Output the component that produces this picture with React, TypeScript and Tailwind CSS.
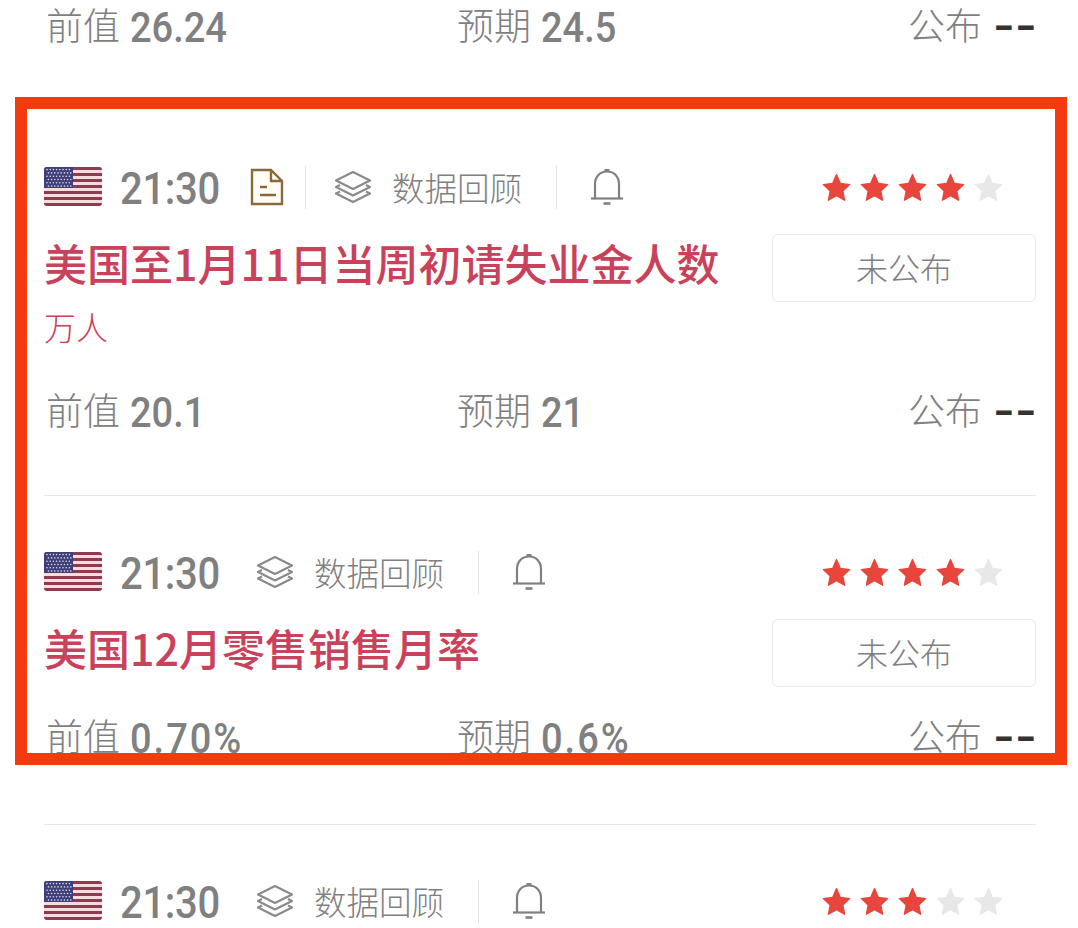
import React from 'react';

const cjk = '"Noto Sans CJK SC", sans-serif';

function Flag() {
    const stripes = [0, 1, 2, 3, 4, 5, 6];
    const dots: [number, number][] = [];
    for (let r = 0; r < 6; r++) {
        for (let c = 0; c < 8; c++) {
            dots.push([3 + c * 3.2 + (r % 2) * 1.4, 2.6 + r * 3.3]);
        }
    }
    return (
        <svg width="58" height="40" viewBox="0 0 58 40" className="shrink-0">
            <defs>
                <clipPath id="flag-clip">
                    <rect width="58" height="39" rx="3" />
                </clipPath>
            </defs>
            <g clipPath="url(#flag-clip)">
                <rect width="58" height="39" fill="#f8dcdc" />
                {stripes.map((i) => (
                    <rect key={i} y={i * 6} width="58" height="3" fill="#8e3a50" />
                ))}
                <rect width="29" height="21" fill="#3f4079" />
                {dots.map(([x, y], i) => (
                    <circle key={i} cx={x} cy={y} r="0.8" fill="#d9d9ea" />
                ))}
            </g>
        </svg>
    );
}

function DocIcon() {
    return (
        <svg width="34" height="38" viewBox="0 0 34 38" fill="none" stroke="#8a6a3c" strokeWidth="2.4" className="shrink-0">
            <path d="M2 2H21L32 13V36H2Z" fill="#fffdf6" />
            <path d="M21 2V13H32" />
            <path d="M10 19H17M10 27H26" />
        </svg>
    );
}

function LayersIcon() {
    return (
        <svg width="40" height="34" viewBox="0 0 40 34" fill="none" stroke="#8a8a8a" strokeWidth="2.2" strokeLinejoin="round" className="shrink-0">
            <path d="M20 2L37 10.5L20 19L3 10.5Z" />
            <path d="M7 15L3 17L20 25.5L37 17L33 15" />
            <path d="M7 21.5L3 23.5L20 32L37 23.5L33 21.5" />
        </svg>
    );
}

function BellIcon() {
    return (
        <svg width="34" height="40" viewBox="0 0 34 40" fill="none" stroke="#808080" strokeWidth="2.2" className="shrink-0">
            <path d="M5 31V17C5 9.5 10 4.5 17 4.5C24 4.5 29 9.5 29 17V31" />
            <path d="M1 31.5H33" />
            <path d="M14.5 3.5H19.5" strokeWidth="3" />
            <path d="M13.5 36.5H20.5" strokeWidth="2.6" />
        </svg>
    );
}

function Stars({ count }: { count: number }) {
    return (
        <div className="flex justify-end gap-[7px] pr-[32px]">
            {[0, 1, 2, 3, 4].map((i) => (
                <svg key={i} width="31" height="30" viewBox="0 0 24 23">
                    <path
                        d="M12 1.8l3 6.9 7.2 .9-5.3 5 1.4 7.2L12 18.3l-6.3 3.5 1.4-7.2-5.3-5 7.2-.9z"
                        fill={i < count ? '#e8453c' : '#e8e8e8'}
                        stroke={i < count ? '#e8453c' : '#e8e8e8'}
                        strokeWidth="1"
                        strokeLinejoin="round"
                    />
                </svg>
            ))}
        </div>
    );
}

function Time() {
    return (
        <span className="inline-block w-[98px] shrink-0 scale-y-[1.12] text-[40px] leading-none font-medium tracking-[-0.3px] text-[#808080] font-['Roboto',sans-serif]">
            21:30
        </span>
    );
}

function Header({ stars, hasDoc }: { stars: number; hasDoc?: boolean }) {
    return (
        <div className="flex h-[40px] items-center justify-between">
            <div className="flex items-center">
                <Flag />
                <div className="mt-[4px] ml-[18px] flex">
                    <Time />
                </div>
                {hasDoc ? (
                    <div className="ml-[32px] flex items-center">
                        <DocIcon />
                        <div className="ml-[21px] h-[43px] w-px bg-[#e3e3e3]" />
                        <div className="ml-[27px]">
                            <LayersIcon />
                        </div>
                    </div>
                ) : (
                    <div className="ml-[37px]">
                        <LayersIcon />
                    </div>
                )}
                <span className="ml-[19px] text-[32.5px] leading-none font-light text-[#808080]">数据回顾</span>
                <div className="ml-[34px] h-[43px] w-px bg-[#e3e3e3]" />
                <div className="ml-[33px]">
                    <BellIcon />
                </div>
            </div>
            <Stars count={stars} />
        </div>
    );
}

function Values({ prev, expect, className }: { prev: string; expect: string; className?: string }) {
    const label = 'pb-[5px] text-[37px] leading-none font-light text-[#808080]';
    const num = "ml-[10px] inline-block scale-y-[1.12] text-[38px] leading-none font-medium text-[#808080] font-['Roboto',sans-serif]";
    return (
        <div className={`flex items-center pl-[2px] ${className ?? ''}`}>
            <div className="flex w-[411px] items-center">
                <span className={label}>前值</span>
                <span className={`${num} ${prev.includes('%') ? 'tracking-[2px]' : ''}`}>{prev}</span>
            </div>
            <div className="flex flex-1 items-center">
                <span className={label}>预期</span>
                <span className={`${num} ${expect.includes('%') ? 'tracking-[2px]' : ''}`}>{expect}</span>
            </div>
            <div className="flex items-center pr-[3px]">
                <span className={label}>公布</span>
                <span className="ml-[11px] inline-block w-[40px] origin-left scale-x-[1.4] text-[40px] leading-none font-bold text-[#333333] font-['Roboto',sans-serif]">
                    --
                </span>
            </div>
        </div>
    );
}

function Item({
    title,
    unit,
    stars,
    hasDoc,
}: {
    title: string;
    unit?: string;
    stars: number;
    hasDoc?: boolean;
}) {
    return (
        <div className="pt-[56px]">
            <Header stars={stars} hasDoc={hasDoc} />
            <div className="mt-[27px] flex justify-between">
                <div>
                    <h3 className="h-[62px] text-[43px] leading-[56px] font-medium whitespace-nowrap text-[#c9415a]">{title}</h3>
                    {unit ? <p className="mt-[14px] h-[32px] text-[32px] leading-[32px] font-light text-[#c9415a]">{unit}</p> : null}
                </div>
                <div className="flex h-[68px] w-[264px] items-center justify-center rounded-[6px] border border-[#e9e9e9] pb-[3px] text-[32px] font-light text-[#808080]">
                    未公布
                </div>
            </div>
        </div>
    );
}

export default function App() {
    return (
        <div className="relative h-[928px] w-[1078px] overflow-hidden bg-white pr-[42px] pl-[44px]" style={{ fontFamily: cjk }}>
            <Values prev="26.24" expect="24.5" className="h-[54px]" />

            <div className="pt-[57px]">
                <Item title="美国至1月11日当周初请失业金人数" unit="万人" stars={4} hasDoc />
                <Values prev="20.1" expect="21" className="mt-[40px] h-[60px]" />
            </div>

            <div className="mt-[53px] border-t border-[#e8e8e8]">
                <Item title="美国12月零售销售月率" stars={4} />
                <Values prev="0.70%" expect="0.6%" className="mt-[21px] h-[60px]" />
            </div>

            <div className="mt-[56px] border-t border-[#e8e8e8] pt-[56px]">
                <Header stars={3} />
            </div>

            {/* red annotation frame drawn over the list */}
            <div className="absolute top-[97px] left-[15px] h-[668px] w-[1052px] border-[12px] border-[#f53a10]" />
        </div>
    );
}
